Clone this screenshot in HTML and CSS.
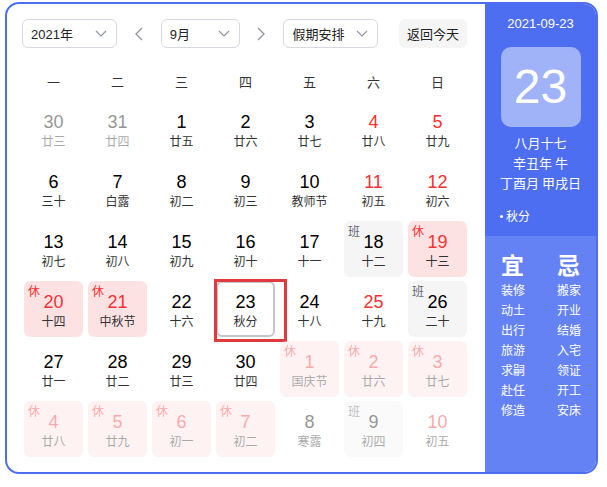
FILE: index.html
```html
<!DOCTYPE html>
<html lang="zh-CN">
<head>
<meta charset="utf-8">
<link rel="stylesheet" href="styles.css">
</head>
<body>
<div class="cal">
  <div class="main">
    <div class="toolbar">
      <div class="select w95"><span>2021年</span><svg width="12" height="7" viewBox="0 0 12 7"><polyline points="1,1 6,6 11,1" fill="none" stroke="#9195a3" stroke-width="1.2"/></svg></div>
      <div class="arrow"><svg width="8" height="14" viewBox="0 0 8 14"><polyline points="7,1 1,7 7,13" fill="none" stroke="#9195a3" stroke-width="1.3"/></svg></div>
      <div class="select w79"><span>9月</span><svg width="12" height="7" viewBox="0 0 12 7"><polyline points="1,1 6,6 11,1" fill="none" stroke="#9195a3" stroke-width="1.2"/></svg></div>
      <div class="arrow"><svg width="8" height="14" viewBox="0 0 8 14"><polyline points="1,1 7,7 1,13" fill="none" stroke="#9195a3" stroke-width="1.3"/></svg></div>
      <div class="select w95"><span>假期安排</span><svg width="12" height="7" viewBox="0 0 12 7"><polyline points="1,1 6,6 11,1" fill="none" stroke="#9195a3" stroke-width="1.2"/></svg></div>
      <div class="today-btn">返回今天</div>
    </div>
    <div class="weekdays">
      <span>一</span><span>二</span><span>三</span><span>四</span><span>五</span><span>六</span><span>日</span>
    </div>
    <div class="grid">
      <div class="cell other"><div class="num">30</div><div class="lunar">廿三</div></div>
      <div class="cell other"><div class="num">31</div><div class="lunar">廿四</div></div>
      <div class="cell"><div class="num">1</div><div class="lunar">廿五</div></div>
      <div class="cell"><div class="num">2</div><div class="lunar">廿六</div></div>
      <div class="cell"><div class="num">3</div><div class="lunar">廿七</div></div>
      <div class="cell red"><div class="num">4</div><div class="lunar">廿八</div></div>
      <div class="cell red"><div class="num">5</div><div class="lunar">廿九</div></div>

      <div class="cell"><div class="num">6</div><div class="lunar">三十</div></div>
      <div class="cell"><div class="num">7</div><div class="lunar">白露</div></div>
      <div class="cell"><div class="num">8</div><div class="lunar">初二</div></div>
      <div class="cell"><div class="num">9</div><div class="lunar">初三</div></div>
      <div class="cell"><div class="num">10</div><div class="lunar">教师节</div></div>
      <div class="cell red"><div class="num">11</div><div class="lunar">初五</div></div>
      <div class="cell red"><div class="num">12</div><div class="lunar">初六</div></div>

      <div class="cell"><div class="num">13</div><div class="lunar">初七</div></div>
      <div class="cell"><div class="num">14</div><div class="lunar">初八</div></div>
      <div class="cell"><div class="num">15</div><div class="lunar">初九</div></div>
      <div class="cell"><div class="num">16</div><div class="lunar">初十</div></div>
      <div class="cell"><div class="num">17</div><div class="lunar">十一</div></div>
      <div class="cell work"><span class="tag">班</span><div class="num">18</div><div class="lunar">十二</div></div>
      <div class="cell rest"><span class="tag">休</span><div class="num">19</div><div class="lunar">十三</div></div>

      <div class="cell rest"><span class="tag">休</span><div class="num">20</div><div class="lunar">十四</div></div>
      <div class="cell rest"><span class="tag">休</span><div class="num">21</div><div class="lunar">中秋节</div></div>
      <div class="cell"><div class="num">22</div><div class="lunar">十六</div></div>
      <div class="cell selected"><div class="num">23</div><div class="lunar">秋分</div><div class="mark"></div></div>
      <div class="cell"><div class="num">24</div><div class="lunar">十八</div></div>
      <div class="cell red"><div class="num">25</div><div class="lunar">十九</div></div>
      <div class="cell work"><span class="tag">班</span><div class="num">26</div><div class="lunar">二十</div></div>

      <div class="cell"><div class="num">27</div><div class="lunar">廿一</div></div>
      <div class="cell"><div class="num">28</div><div class="lunar">廿二</div></div>
      <div class="cell"><div class="num">29</div><div class="lunar">廿三</div></div>
      <div class="cell"><div class="num">30</div><div class="lunar">廿四</div></div>
      <div class="cell rest other"><span class="tag">休</span><div class="num">1</div><div class="lunar">国庆节</div></div>
      <div class="cell rest other"><span class="tag">休</span><div class="num">2</div><div class="lunar">廿六</div></div>
      <div class="cell rest other"><span class="tag">休</span><div class="num">3</div><div class="lunar">廿七</div></div>

      <div class="cell rest other"><span class="tag">休</span><div class="num">4</div><div class="lunar">廿八</div></div>
      <div class="cell rest other"><span class="tag">休</span><div class="num">5</div><div class="lunar">廿九</div></div>
      <div class="cell rest other"><span class="tag">休</span><div class="num">6</div><div class="lunar">初一</div></div>
      <div class="cell rest other"><span class="tag">休</span><div class="num">7</div><div class="lunar">初二</div></div>
      <div class="cell other"><div class="num">8</div><div class="lunar">寒露</div></div>
      <div class="cell work other"><span class="tag">班</span><div class="num">9</div><div class="lunar">初四</div></div>
      <div class="cell red other"><div class="num">10</div><div class="lunar">初五</div></div>
    </div>
  </div>
  <div class="panel">
    <div class="panel-top">
      <div class="pdate">2021-09-23</div>
      <div class="bigday">23</div>
      <div class="pline first">八月十七</div>
      <div class="pline">辛丑年 牛</div>
      <div class="pline">丁酉月 甲戌日</div>
      <div class="term"><span class="dot"></span>秋分</div>
    </div>
    <div class="panel-bottom">
      <div class="col">
        <div class="yj">宜</div>
        <div class="item first">装修</div>
        <div class="item">动土</div>
        <div class="item">出行</div>
        <div class="item">旅游</div>
        <div class="item">求嗣</div>
        <div class="item">赴任</div>
        <div class="item">修造</div>
      </div>
      <div class="col">
        <div class="yj">忌</div>
        <div class="item first">搬家</div>
        <div class="item">开业</div>
        <div class="item">结婚</div>
        <div class="item">入宅</div>
        <div class="item">领证</div>
        <div class="item">开工</div>
        <div class="item">安床</div>
      </div>
    </div>
  </div>
</div>
</body>
</html>
```

FILE: styles.css
```css
* { box-sizing: border-box; }
html, body { margin: 0; padding: 0; background: #fff; }
body {
  font-family: "Noto Sans CJK SC", "Liberation Sans", sans-serif;
  color: #333;
  padding: 2px 0 0 5px;
}
.cal {
  width: 593px;
  height: 472px;
  border: 2px solid #4e6ef2;
  border-radius: 14px;
  overflow: hidden;
  display: flex;
}
.main {
  width: 478px;
  flex: none;
  padding: 15px 18px 0 17px;
}
.toolbar {
  display: flex;
  align-items: center;
  height: 29px;
  margin-left: -2px;
}
.select {
  height: 29px;
  border: 1px solid #d7d9e0;
  border-radius: 6px;
  display: flex;
  align-items: center;
  justify-content: space-between;
  padding: 0 9px 0 8px;
  font-size: 13px;
  color: #222;
}
.select span { font-family: "Liberation Sans", "Noto Sans CJK SC", sans-serif; }
.w95 { width: 95px; }
.w79 { width: 79px; }
.arrow {
  width: 44px;
  height: 29px;
  display: flex;
  align-items: center;
  justify-content: center;
}
.today-btn {
  margin-left: 21px;
  width: 68px;
  height: 29px;
  background: #f5f5f6;
  border-radius: 6px;
  font-size: 13px;
  color: #222;
  display: flex;
  align-items: center;
  justify-content: center;
}
.weekdays {
  margin-top: 22px;
  display: grid;
  grid-template-columns: repeat(7, 59px);
  column-gap: 5px;
  height: 24px;
  line-height: 24px;
  font-size: 13px;
  color: #333;
  text-align: center;
}
.grid {
  margin-top: 7px;
  display: grid;
  grid-template-columns: repeat(7, 59px);
  grid-auto-rows: 56px;
  column-gap: 5px;
  row-gap: 4px;
}
.cell {
  position: relative;
  border-radius: 6px;
  text-align: center;
  padding-top: 10px;
}
.num {
  font-family: "Liberation Sans", Arial, sans-serif;
  font-size: 18px;
  line-height: 22px;
  color: #000;
}
.lunar {
  font-size: 12px;
  line-height: 16px;
  color: #333;
}
.red .num, .rest .num { color: #f73131; }
.rest { background: #fde2e4; }
.work { background: #f5f5f6; }
.tag {
  position: absolute;
  left: 4px;
  top: 3px;
  font-size: 12px;
  line-height: 14px;
}
.rest .tag { color: #f73131; }
.work .tag { color: #626675; }
.other { opacity: 0.42; }
.selected {
  border: 2px solid #c4c6cc;
  padding-top: 8px;
}
.mark {
  position: absolute;
  left: -4px;
  top: -4px;
  width: 73px;
  height: 63px;
  border: 3px solid #e03a3e;
}
.panel {
  flex: 1;
  display: flex;
  flex-direction: column;
  color: #fff;
}
.panel-top {
  background: #4e6ef2;
  height: 232px;
  padding-top: 11px;
  display: flex;
  flex-direction: column;
  align-items: center;
}
.pdate {
  font-family: "Liberation Sans", Arial, sans-serif;
  font-size: 13px;
  line-height: 18px;
}
.bigday {
  margin-top: 14px;
  width: 80px;
  height: 80px;
  border-radius: 10px;
  background: #a0b2f8;
  font-family: "Liberation Sans", Arial, sans-serif;
  font-size: 48px;
  line-height: 80px;
  text-align: center;
}
.pline {
  font-size: 13px;
  line-height: 20px;
}
.pline.first { margin-top: 6px; }
.term {
  align-self: flex-start;
  margin-top: 13px;
  padding-left: 15px;
  font-size: 12px;
  line-height: 20px;
  display: flex;
  align-items: center;
}
.dot {
  width: 3px;
  height: 3px;
  border-radius: 50%;
  background: #fff;
  margin-right: 3px;
}
.panel-bottom {
  flex: 1;
  background: #6482f4;
  padding: 14px 0 0 16px;
  display: flex;
}
.col { flex: none; width: 56px; }
.col + .col { width: 39px; }
.yj {
  font-size: 23px;
  font-weight: 700;
  line-height: 28px;
}
.item {
  font-size: 12px;
  line-height: 20px;
}
.item.first { margin-top: 2px; }
```
